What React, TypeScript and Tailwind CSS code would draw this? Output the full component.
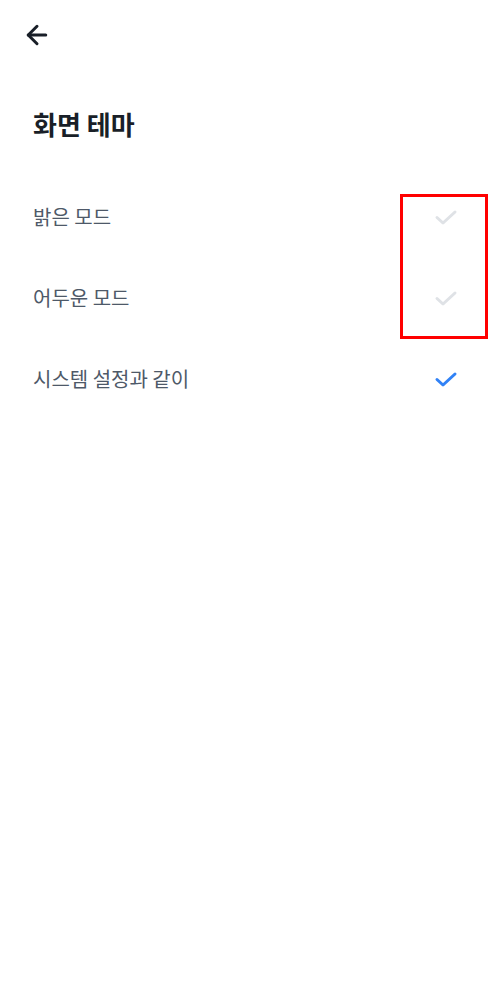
import { ArrowLeft } from "lucide-react";

const items = [
  { label: "밝은 모드", checked: false },
  { label: "어두운 모드", checked: false },
  { label: "시스템 설정과 같이", checked: true },
];

function Check({ active }: { active: boolean }) {
  return (
    <svg width="24" height="24" viewBox="0 0 24 24" fill="none">
      <path
        d="M3 12.5l6 5.5L21 7"
        stroke={active ? "#3182f6" : "#dfe2e6"}
        strokeWidth="3"
        strokeLinecap="round"
        strokeLinejoin="round"
      />
    </svg>
  );
}

export default function App() {
  return (
    <div className="relative min-h-[1000px] w-[497px] bg-white font-['Noto_Sans_CJK_KR','Noto_Sans',sans-serif]">
      <div className="h-[70px] flex items-center pl-[22px]">
        <ArrowLeft className="w-[30px] h-[30px] text-[#191f28]" strokeWidth={2.4} />
      </div>

      <h1 className="pl-[33px] pt-[36px] text-[26px] font-bold text-[#191f28] leading-[36px]">화면 테마</h1>

      <ul className="mt-[34px]">
        {items.map((item) => (
          <li key={item.label} className="h-[81px] flex items-center justify-between pl-[33px] pr-[39px]">
            <span className="text-[20px] text-[#4e5968] leading-none">{item.label}</span>
            <Check active={item.checked} />
          </li>
        ))}
      </ul>

      {/* annotation box */}
      <div className="absolute left-[400px] top-[194px] w-[88px] h-[145px] border-[3px] border-[#ff0000]" />
    </div>
  );
}
